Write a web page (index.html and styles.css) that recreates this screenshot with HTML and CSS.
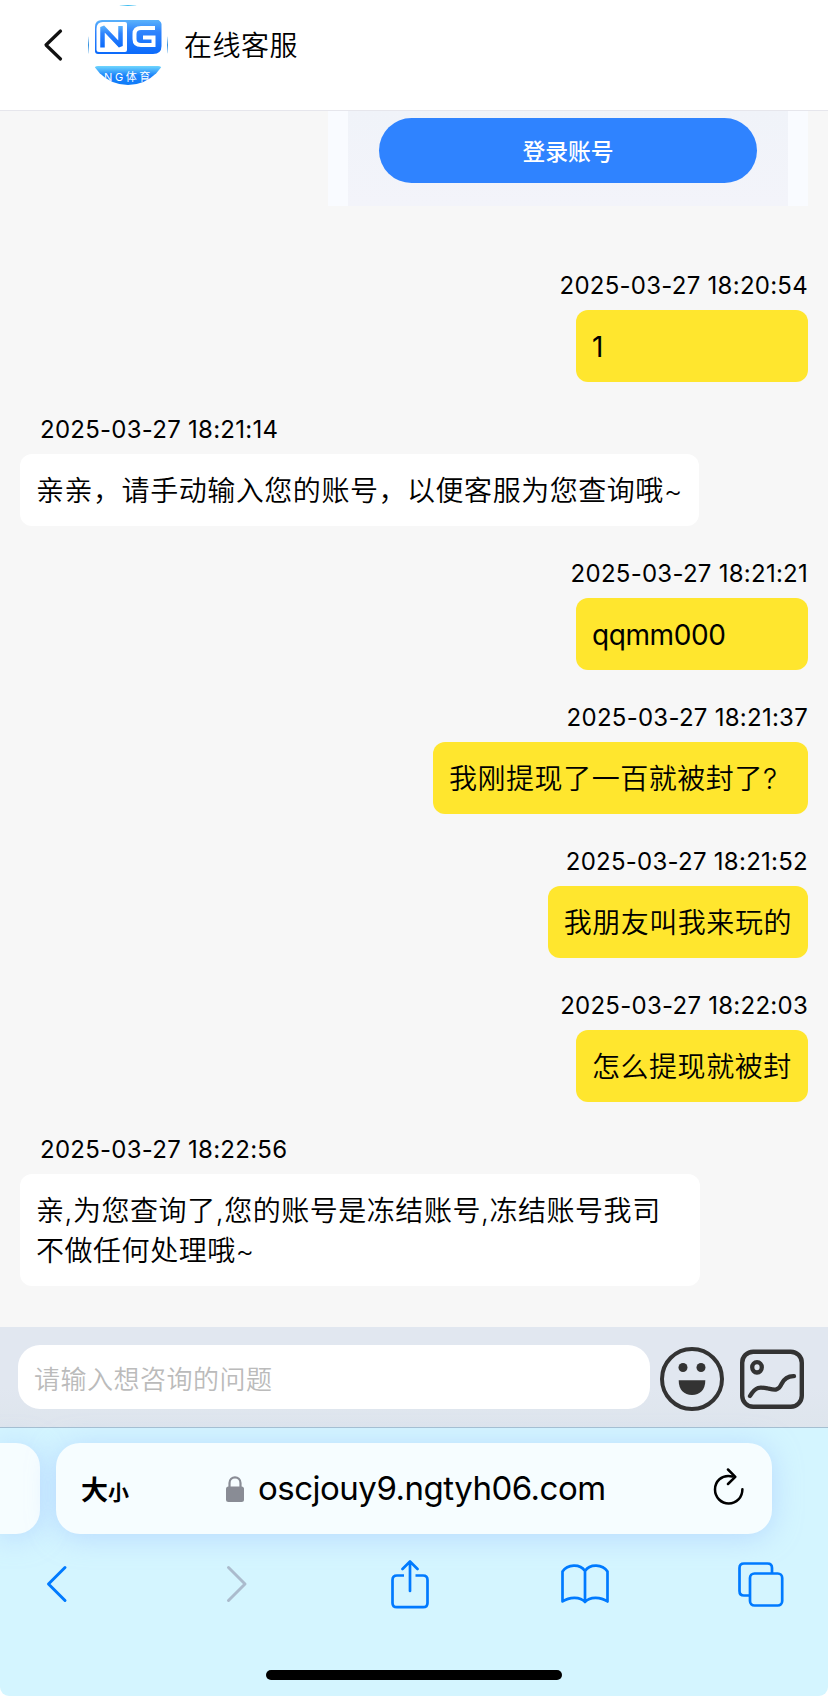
FILE: index.html
```html
<!DOCTYPE html>
<html lang="zh-CN">
<head>
    <meta charset="UTF-8">
    <meta name="viewport" content="width=device-width, initial-scale=1.0">
    <title>在线客服</title>
    <link rel="stylesheet" href="styles.css">
</head>
<body>
    <header class="header">
        <svg class="back" width="20" height="34" viewBox="0 0 20 34">
            <path d="M17.5 3 L3 17 L17.5 31" fill="none" stroke="#111" stroke-width="3.2" stroke-linecap="round" stroke-linejoin="round"/>
        </svg>
        <svg class="avatar" width="80" height="80" viewBox="0 0 80 80">
            <defs>
                <linearGradient id="blue" x1="0" y1="0" x2="0" y2="1">
                    <stop offset="0" stop-color="#5ab2fb"/>
                    <stop offset="0.35" stop-color="#2f83fd"/>
                    <stop offset="1" stop-color="#0b6afb"/>
                </linearGradient>
                <linearGradient id="band" x1="0" y1="0" x2="0" y2="1">
                    <stop offset="0" stop-color="#6fd6fe"/>
                    <stop offset="0.4" stop-color="#1b82fa"/>
                    <stop offset="1" stop-color="#0877f8"/>
                </linearGradient>
                <clipPath id="round"><circle cx="40" cy="40" r="40"/></clipPath>
            </defs>
            <g clip-path="url(#round)">
                <rect width="80" height="80" fill="#fff"/>
                <rect width="80" height="1" fill="#3cbcf0"/>
                <rect width="1" height="80" fill="#2d8fe0"/>
                <rect x="79" width="1" height="80" fill="#2d8fe0"/>
                <path d="M14 15 H70 Q73.500 15 73.500 18.500 V41 Q73.500 49 65 49 H10 Q7 49 7 46 V22 Q7 15 14 15 Z" fill="url(#blue)"/>
                <path d="M15 17 H37 Q39 17 39 19 V45 Q39 47 37 47 H11 Q8.500 47 8.500 44.500 V24 Q8.500 17 15 17 Z" fill="#fff"/>
                <path d="M14.500 42.500 V22 L32.500 41 V21" fill="none" stroke="url(#blue)" stroke-width="4.500" stroke-linejoin="bevel"/>
                <path d="M67 23 H53 Q46.500 23 46.500 29 V34 Q46.500 40 53 40 H65.500 V32.500 H55" fill="none" stroke="#fff" stroke-width="4"/>
                <rect x="6" y="61" width="68" height="24" rx="4" fill="url(#band)"/>
                <text class="logo-text" x="16" y="75.500">NG体育</text>
            </g>
        </svg>
        <h1 class="title">在线客服</h1>
    </header>

    <main class="chat">
        <div class="picture">
            <div class="picture-inner">
                <div class="login">登录账号</div>
            </div>
        </div>

        <div class="msg me">
            <div class="time">2025-03-27 18:20:54</div>
            <div class="bubble latin">1</div>
        </div>
        <div class="msg">
            <div class="time">2025-03-27 18:21:14</div>
            <div class="bubble">亲亲，请手动输入您的账号，以便客服为您查询哦~</div>
        </div>
        <div class="msg me">
            <div class="time">2025-03-27 18:21:21</div>
            <div class="bubble latin">qqmm000</div>
        </div>
        <div class="msg me">
            <div class="time">2025-03-27 18:21:37</div>
            <div class="bubble ask">我刚提现了一百就被封了?</div>
        </div>
        <div class="msg me">
            <div class="time">2025-03-27 18:21:52</div>
            <div class="bubble">我朋友叫我来玩的</div>
        </div>
        <div class="msg me">
            <div class="time">2025-03-27 18:22:03</div>
            <div class="bubble">怎么提现就被封</div>
        </div>
        <div class="msg">
            <div class="time">2025-03-27 18:22:56</div>
            <div class="bubble long">亲,为您查询了,您的账号是冻结账号,冻结账号我司<br>不做任何处理哦~</div>
        </div>
    </main>

    <div class="input-bar">
        <div class="input">请输入想咨询的问题</div>
        <svg class="face" width="64" height="64" viewBox="0 0 64 64">
            <circle cx="32" cy="32" r="30" fill="none" stroke="#333" stroke-width="4"/>
            <circle cx="23" cy="20.500" r="4.500" fill="#333"/>
            <circle cx="41" cy="20.500" r="4.500" fill="#333"/>
            <path d="M18.700 33.300 H45.300 C45.300 43 40 48 32 48 C24 48 18.700 43 18.700 33.300 Z" fill="#333"/>
        </svg>
        <svg class="photo" width="64" height="60" viewBox="0 0 64 60">
            <rect x="2.200" y="2.700" width="59.600" height="55" rx="11" fill="none" stroke="#333" stroke-width="4.400"/>
            <ellipse cx="17" cy="18.300" rx="4.800" ry="5.200" fill="none" stroke="#333" stroke-width="4.300"/>
            <path d="M10 47 C16 37 20 38 28 39.500 C35 41 38.500 42 41.500 35 C44 30 48 27 54 27.200" fill="none" stroke="#333" stroke-width="4.300" stroke-linecap="round"/>
        </svg>
    </div>

    <footer class="browser">
        <div class="tabs">
            <div class="tab-prev"></div>
            <div class="address">
                <div class="size"><span class="big">大</span><span class="small">小</span></div>
                <div class="site">
                    <svg width="18" height="26" viewBox="0 0 18 26">
                        <path d="M3.500 12 V7 C3.500 -0.600 14.500 -0.600 14.500 7 V12" fill="none" stroke="#898c95" stroke-width="2.200"/>
                        <rect y="10.500" width="18" height="15.500" rx="2.500" fill="#898c95"/>
                    </svg>
                    <span class="url">oscjouy9.ngtyh06.com</span>
                </div>
                <svg class="reload" width="32" height="38" viewBox="0 0 32 38">
                    <path d="M19.500 8.500 C8 6 2 14 2 21.500 C2 29.500 8.300 35.500 15.700 35.500 C23.500 35.500 29.400 29.500 29.400 21.200" fill="none" stroke="#000" stroke-width="2.500" stroke-linecap="round"/>
                    <path d="M15 1.500 L22.300 8.800 L15 16" fill="none" stroke="#000" stroke-width="2.500" stroke-linecap="round" stroke-linejoin="round"/>
                </svg>
            </div>
        </div>
        <nav class="toolbar">
            <svg width="22" height="38" viewBox="0 0 22 38">
                <path d="M19 2.500 L2.500 19 L19 35.500" fill="none" stroke="#007aff" stroke-width="3" stroke-linecap="round" stroke-linejoin="round"/>
            </svg>
            <svg class="forward" width="22" height="38" viewBox="0 0 22 38">
                <path d="M2.500 2.500 L19 19 L2.500 35.500" fill="none" stroke="#abbbcd" stroke-width="3" stroke-linecap="round" stroke-linejoin="round"/>
            </svg>
            <svg class="share" width="38" height="49" viewBox="0 0 38 49">
                <path d="M13 15.500 H6 Q1.500 15.500 1.500 20 V43 Q1.500 47.200 6 47.200 H32 Q36.500 47.200 36.500 43 V20 Q36.500 15.500 32 15.500 H24.500" fill="none" stroke="#007aff" stroke-width="2.700"/>
                <path d="M19 31 V2 M11.500 9 L19 1.500 L26.500 9" fill="none" stroke="#007aff" stroke-width="2.700" stroke-linecap="round" stroke-linejoin="round"/>
            </svg>
            <svg class="book" width="48" height="40" viewBox="0 0 48 40">
                <path d="M24 7 C19 -0.500 6.500 0 1.500 7.500 V37.500 C8 33 19 32 24 38 C29 32 40 33 46.500 37.500 V7.500 C41.500 0 29 -0.500 24 7 Z M24 7 V37.500" fill="none" stroke="#007aff" stroke-width="2.700" stroke-linejoin="round"/>
            </svg>
            <svg class="pages" width="46" height="45" viewBox="0 0 46 45">
                <path d="M11 33.500 H6 Q1.500 33.500 1.500 29 V6 Q1.500 1.500 6 1.500 H29.500 Q34 1.500 34 6 V11" fill="none" stroke="#007aff" stroke-width="2.700"/>
                <rect x="12" y="11.500" width="32.200" height="32" rx="4.500" fill="none" stroke="#007aff" stroke-width="2.700"/>
            </svg>
        </nav>
        <div class="home"></div>
    </footer>
</body>
</html>
```
FILE: styles.css
```css
* {
    box-sizing: border-box;
}

body {
    margin: 0;
    width: 828px;
    height: 1696px;
    display: flex;
    flex-direction: column;
    overflow: hidden;
    background: #fff;
    color: #000;
    font-family: Inter, "Noto Sans CJK SC", sans-serif;
}

svg {
    display: block;
    flex-shrink: 0;
}

/* 頂部 */
.header {
    height: 111px;
    padding: 5px 0 0 43px;
    display: flex;
    align-items: flex-start;
    border-bottom: 1px solid #e6e6ec;
}

.back {
    margin-top: 23px;
}

.avatar {
    margin-left: 25px;
}

.logo-text {
    font-size: 11px;
    letter-spacing: 2.6px;
    fill: #fff;
}

.title {
    margin: 21px 0 0 16px;
    font-size: 28px;
    line-height: 40px;
    font-weight: 350;
    letter-spacing: 0.5px;
}

/* 聊天 */
.chat {
    height: 1216px;
    padding: 0 20px;
    background: #f7f7f7;
    display: flex;
    flex-direction: column;
}

.picture {
    width: 480px;
    height: 95px;
    margin-bottom: 32px;
    padding: 0 20px;
    align-self: flex-end;
    background: #f9fbff;
}

.picture-inner {
    height: 95px;
    padding: 7px 31px 0;
    background: linear-gradient(#f0f3f9, #f3f4fa);
}

.login {
    height: 65px;
    line-height: 67px;
    border-radius: 33px;
    background: #2f83ff;
    color: #fff;
    font-size: 22.8px;
    font-weight: 500;
    text-align: center;
}

.msg {
    display: flex;
    flex-direction: column;
    align-items: flex-start;
}

.me {
    align-items: flex-end;
}

.time {
    height: 72px;
    padding: 28px 0 0 20px;
    font-size: 24px;
    line-height: 40px;
    letter-spacing: 0.26px;
}

.me .time {
    padding-left: 0;
}

.bubble {
    min-width: 232px;
    padding: 17px 16px 15px;
    border-radius: 12px;
    background: #fff;
    font-size: 28px;
    font-weight: 350;
    line-height: 40px;
    letter-spacing: 0.54px;
    white-space: nowrap;
}

.me .bubble {
    background: #ffe62e;
}

.bubble.latin {
    font-weight: 400;
    letter-spacing: -0.4px;
}

.me .ask {
    width: 375px;
}

.long {
    width: 680px;
}

/* 輸入框 */
.input-bar {
    height: 101px;
    padding: 18px 0 0 18px;
    display: flex;
    background: linear-gradient(#e1e7f0 60%, #dee5ed);
    border-bottom: 1px solid #a5bfd1;
}

.input {
    width: 632px;
    height: 64px;
    padding-left: 16px;
    border-radius: 22px;
    background: #fff;
    color: #bbb;
    font-size: 26px;
    font-weight: 350;
    line-height: 70px;
    letter-spacing: 0.5px;
}

.face {
    margin: 2px 0 0 10px;
}

.photo {
    margin: 4px 0 0 16px;
}

/* 瀏覽器 */
.browser {
    height: 268px;
    padding-top: 15px;
    background: #d4f5ff;
    border-radius: 0 0 9px 9px;
}

.tabs {
    display: flex;
    gap: 16px;
}

.tab-prev,
.address {
    height: 91px;
    background: #f6fdff;
    box-shadow: 0 3px 28px rgba(160, 195, 255, 0.55);
}

.tab-prev {
    width: 40px;
    border-radius: 0 24px 24px 0;
}

.address {
    width: 716px;
    padding: 0 27px 0 25px;
    border-radius: 24px;
    display: flex;
    align-items: center;
}

.size {
    width: 145px;
    padding-top: 4px;
    display: flex;
    align-items: flex-end;
    font-weight: 600;
    line-height: 40px;
}

.big {
    font-size: 27px;
}

.small {
    font-size: 21px;
    font-weight: 700;
    line-height: 36px;
}

.site {
    display: flex;
    align-items: center;
    gap: 14px;
}

.url {
    margin-top: -2px;
    font-size: 33px;
    line-height: 44px;
    letter-spacing: -0.5px;
}

.reload {
    margin: -4px 0 0 auto;
}

.toolbar {
    height: 52px;
    margin-top: 24px;
    padding-left: 46px;
    display: flex;
    align-items: center;
}

.forward {
    margin-left: 158px;
}

.share {
    margin-left: 143px;
}

.book {
    margin-left: 132px;
}

.pages {
    margin-left: 129px;
}

.home {
    width: 296px;
    height: 10px;
    margin: 60px auto 0;
    border-radius: 5px;
    background: #000;
}
```
